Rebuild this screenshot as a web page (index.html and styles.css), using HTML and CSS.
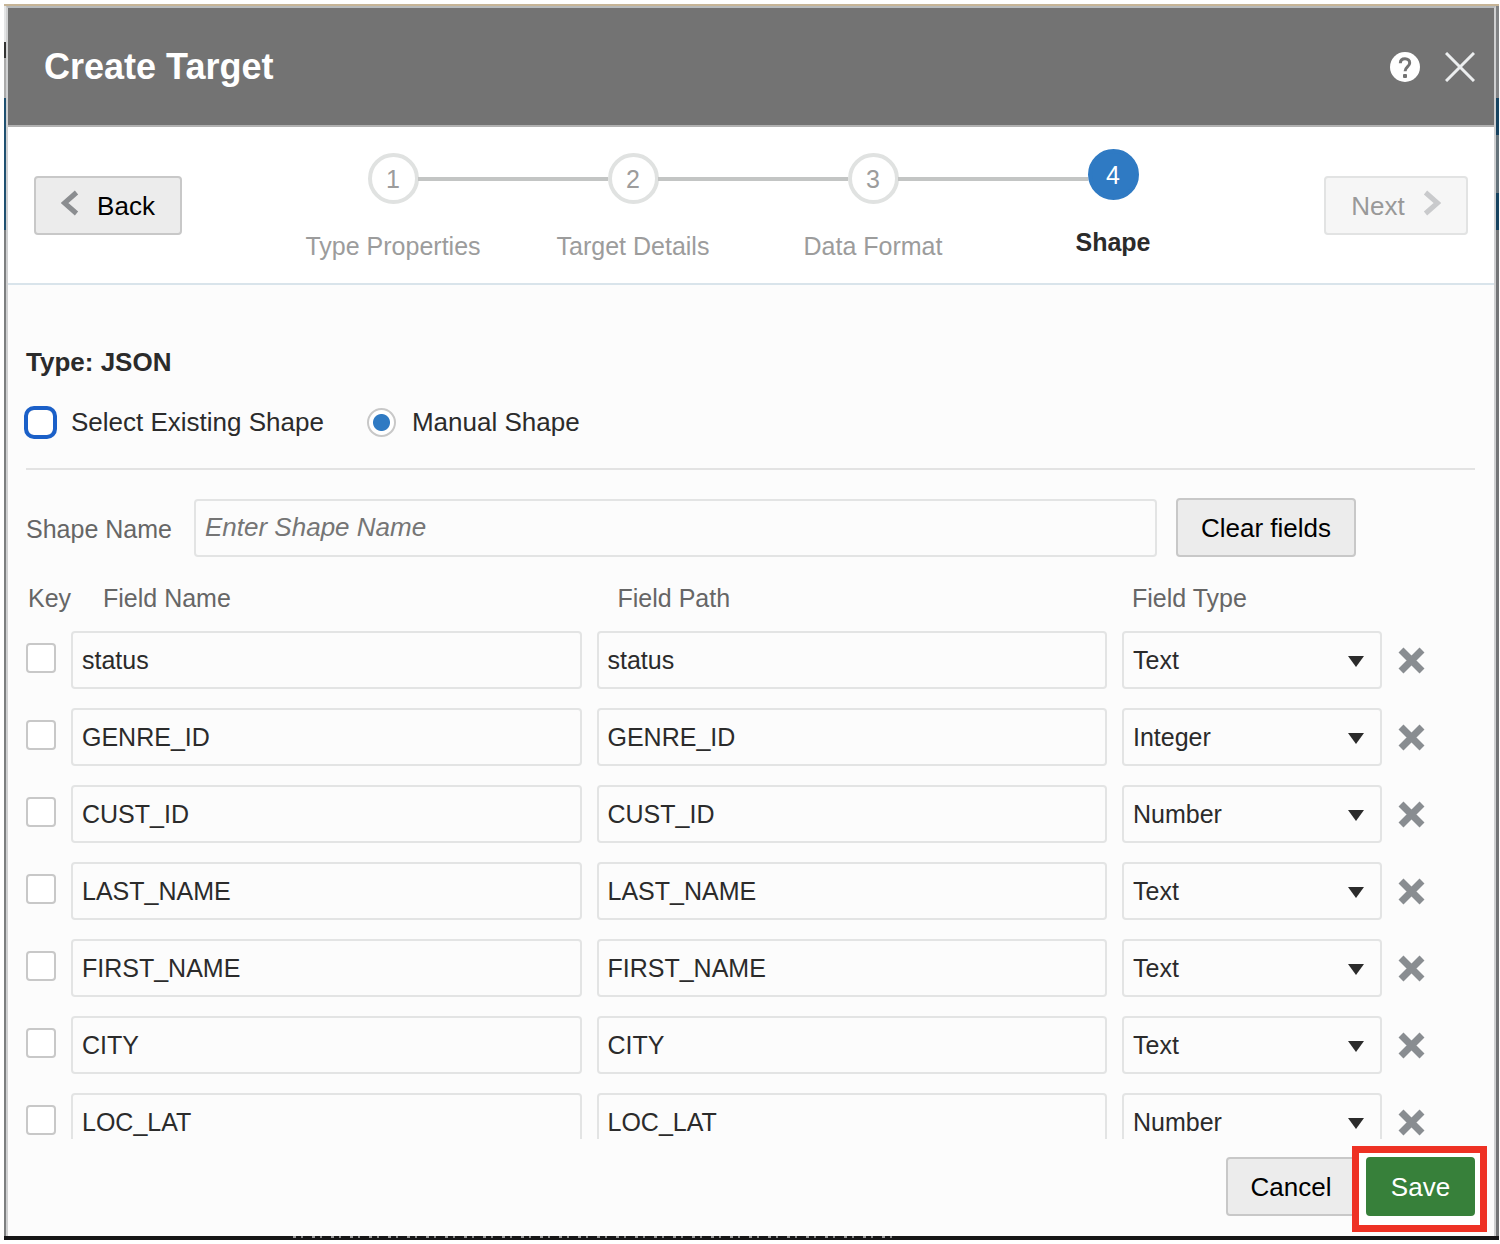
FILE: index.html
```html
<!DOCTYPE html>
<html lang="en">
<head>
<meta charset="utf-8">
<title>Create Target</title>
<link rel="stylesheet" href="styles.css">
</head>
<body>
<div class="backdrop">
<main class="dialog">
  <header class="titlebar">
    <h1>Create Target</h1>
    <button class="icon-button" type="button" aria-label="Help">
      <svg width="30" height="30" viewBox="0 0 30 30"><circle cx="15" cy="15" r="15" fill="#fff"/><path d="M10.300 11.200C10.400 8 12.200 6.700 15 6.700s4.700 1.700 4.700 4.300c0 3.600-4.600 3.700-4.600 8.300" fill="none" stroke="#737373" stroke-width="3"/><rect x="13" y="22" width="4" height="4" rx="1" fill="#737373"/></svg>
    </button>
    <button class="icon-button" type="button" aria-label="Close">
      <svg width="30" height="30" viewBox="0 0 30 30"><path d="M1 1 29 29M29 1 1 29" stroke="#eceeef" stroke-width="3"/></svg>
    </button>
  </header>
  <nav class="wizard" aria-label="Steps">
    <button class="button back" type="button"><svg width="18" height="26" viewBox="0 0 18 26"><path d="M15.500 2.500 3.500 13l12 10.500" fill="none" stroke="#8b8d90" stroke-width="5"/></svg>Back</button>
    <ol class="steps">
      <li><span class="dot">1</span><span>Type Properties</span></li>
      <li><span class="dot">2</span><span>Target Details</span></li>
      <li><span class="dot">3</span><span>Data Format</span></li>
      <li class="current" aria-current="step"><span class="dot">4</span><span>Shape</span></li>
    </ol>
    <button class="button next" type="button" disabled>Next<svg width="18" height="26" viewBox="0 0 18 26"><path d="m2.500 2.500 12 10.500-12 10.500" fill="none" stroke="#c9cacc" stroke-width="5"/></svg></button>
  </nav>
  <section class="content">
    <h2>Type: JSON</h2>
    <div class="modes">
      <label><input class="focused" type="radio" name="mode">Select Existing Shape</label>
      <label><input type="radio" name="mode" checked>Manual Shape</label>
    </div>
    <div class="shape-row">
      <label for="shape-name">Shape Name</label>
      <input class="field" id="shape-name" type="text" placeholder="Enter Shape Name">
      <button class="button clear" type="button">Clear fields</button>
    </div>
    <table>
      <colgroup><col class="col-key"><col><col><col class="col-type"><col class="col-remove"></colgroup>
      <thead><tr><th class="key">Key</th><th>Field Name</th><th>Field Path</th><th class="type">Field Type</th><td></td></tr></thead>
      <tbody id="fields"></tbody>
    </table>
  </section>
  <footer class="actions">
    <button class="button cancel" type="button">Cancel</button>
    <span class="callout"><button class="button save" type="button">Save</button></span>
  </footer>
</main>
<div class="console"></div>
</div>
<script src="fields.js"></script>
</body>
</html>
```
FILE: fields.js
```js
const fields = [
  ["status", "Text"],
  ["GENRE_ID", "Integer"],
  ["CUST_ID", "Number"],
  ["LAST_NAME", "Text"],
  ["FIRST_NAME", "Text"],
  ["CITY", "Text"],
  ["LOC_LAT", "Number"]
];

document.getElementById("fields").innerHTML = fields.map(([name, type]) => `
  <tr>
    <td><input class="check" type="checkbox" aria-label="${name} is a key"></td>
    <td><input class="field" type="text" value="${name}" aria-label="Field name"></td>
    <td><input class="field" type="text" value="${name}" aria-label="Field path"></td>
    <td><span class="select"><select class="field" aria-label="Field type">${
      ["Text", "Integer", "Number"].map(t => `<option${t === type ? " selected" : ""}>${t}</option>`).join("")
    }</select></span></td>
    <td><button class="icon-button remove" type="button" aria-label="Remove ${name}">
      <svg width="27" height="27" viewBox="0 0 27 27"><path d="M3 3 24 24M24 3 3 24" stroke="#898d91" stroke-width="7"/></svg>
    </button></td>
  </tr>`).join("");
```
FILE: styles.css
```css
*, *::before, *::after { box-sizing: border-box; }
body {
  margin: 0;
  background: #fff;
  color: #2b2b2b;
  font: 26px/30px "Liberation Sans", Arial, sans-serif;
}
h1, h2, ol { margin: 0; padding: 0; }
button, input, select { font: inherit; color: inherit; margin: 0; }

/* dimmed application behind the dialog */
.backdrop {
  display: flex;
  flex-direction: column;
  height: calc(100vh - 8px);
  margin: 4px 1px 4px 4px;
  border-top: 2px solid #c6b496;
  background:
    linear-gradient(#e4e5e6 36px, #333 36px 52px, #aaa 52px 92px, #1f5070 92px 224px, #7d7f80 224px) left / 3px 100% no-repeat,
    linear-gradient(#808284 92px, #154360 92px 129px, #64727a 129px 187px, #154360 187px 224px, #737577 224px) right / 4px 100% no-repeat;
}
.dialog {
  display: flex;
  flex-direction: column;
  flex: 1;
  min-height: 0;
  margin: 0 3px 0 2px;
  border: 2px solid #cfd0d1;
  border-top-color: #b6b9bb;
  border-bottom: 0;
  background: #fcfcfc;
}
.console {
  height: 4px;
  background:
    repeating-linear-gradient(90deg, #999 0 3px, transparent 3px 8px, #888 8px 10px, transparent 10px 19px) 289px 0 / 604px 2px no-repeat,
    #161617;
}

.titlebar {
  display: flex;
  align-items: center;
  gap: 25px;
  height: 119px;
  padding: 0 19px 0 36px;
  border-bottom: 2px solid #b1b1b1;
  background: #737373;
  color: #fff;
}
h1 { flex: 1; font-size: 36px; line-height: 40px; }
.icon-button { display: flex; padding: 0; border: 0; background: none; }

.wizard {
  display: flex;
  justify-content: space-between;
  align-items: flex-start;
  height: 158px;
  padding: 22px 26px 0;
  border-bottom: 2px solid #d9e4eb;
  background: #fff;
}
.button {
  height: 59px;
  border: 2px solid #c8c8c8;
  border-radius: 4px;
  padding: 0;
  background: #ececec;
  color: #000;
}
.back, .next {
  display: flex;
  align-items: center;
  justify-content: center;
  gap: 18px;
  margin-top: 27px;
}
.back svg, .next svg { margin-bottom: 6px; }
.back { width: 148px; }
.next { width: 144px; border-color: #e2e3e3; background: #f6f6f6; color: #999; }
.steps {
  display: flex;
  flex: 0 1 960px;
  list-style: none;
  color: #9c9c9c;
  font-size: 25px;
}
.steps li {
  display: flex;
  flex: 1;
  flex-direction: column;
  align-items: center;
  gap: 27px;
  position: relative;
  padding-top: 4px;
}
.steps li:not(:last-child)::after {
  content: "";
  position: absolute;
  top: 28px;
  left: calc(50% + 25px);
  width: calc(100% - 50px);
  height: 4px;
  background: #c3c5c4;
}
.dot {
  display: flex;
  align-items: center;
  justify-content: center;
  width: 51px;
  height: 51px;
  border: 4px solid #e0e2e1;
  border-radius: 50%;
}
.steps .current { padding-top: 0; color: #2b2b2b; font-weight: bold; }
.current .dot { z-index: 1; border-color: #2f7ac3; background: #2f7ac3; color: #fff; font-weight: normal; }

.content {
  flex: 1;
  min-height: 0;
  overflow: hidden;
  padding: 62px 19px 0 18px;
}
h2 { font-size: 26px; }
.modes {
  display: flex;
  gap: 43px;
  margin-top: 30px;
  padding-bottom: 31px;
  border-bottom: 2px solid #e3e3e3;
}
.modes label { display: flex; align-items: center; gap: 16px; }
.modes input {
  appearance: none;
  width: 29px;
  height: 29px;
  border: 2px solid #c8c8c8;
  border-radius: 50%;
  background: #fff;
}
.modes input:checked { background: radial-gradient(circle, #2f7ac3 8px, #fff 9px); }
.modes .focused { outline: 4px solid #1b60c8; outline-offset: -2px; border-radius: 8px; }

.shape-row {
  display: flex;
  align-items: center;
  margin: 28px 119px 25px 0;
  color: #666;
}
.shape-row label { width: 168px; padding-top: 3px; font-size: 25px; }
.shape-row .field { flex: 1; margin-right: 19px; font-size: 26px; }
.field {
  display: block;
  width: 100%;
  min-width: 0;
  height: 58px;
  border: 2px solid #e3e4e4;
  border-radius: 4px;
  padding: 0 9px;
  background: #fcfcfc;
  font-size: 25px;
}
.field::placeholder { color: #757575; font-style: italic; }
.clear { width: 180px; }

table { width: 100%; table-layout: fixed; border-collapse: collapse; }
.col-key { width: 45px; }
.col-type { width: 275px; }
.col-remove { width: 78px; }
th {
  height: 49px;
  padding: 0 0 17px 32px;
  color: #666;
  font-weight: normal;
  font-size: 25px;
  text-align: left;
  white-space: nowrap;
}
th + th + th { padding-left: 21px; }
th.key { padding-left: 2px; }
th.type { padding-left: 10px; }
tbody td { padding: 0 15px 19px 0; vertical-align: top; }
tbody td:first-child { padding-right: 0; }
.check {
  appearance: none;
  display: block;
  width: 30px;
  height: 30px;
  margin-top: 12px;
  border: 2px solid #c8c8c8;
  border-radius: 4px;
  background: #fff;
}
.select { display: block; position: relative; }
.select select { appearance: none; }
.select::after {
  content: "";
  position: absolute;
  top: 25px;
  right: 18px;
  border: 8px solid transparent;
  border-top: 11px solid #2b2b2b;
  border-bottom: 0;
  pointer-events: none;
}
.remove { padding: 16px 1px 15px; }

.actions {
  display: flex;
  justify-content: flex-end;
  align-items: flex-start;
  gap: 10px;
  height: 97px;
  padding: 18px 19px 0;
}
.cancel { width: 130px; }
.save { display: block; width: 109px; border-color: #37803a; background: #37803a; color: #fff; }
.callout { position: relative; z-index: 0; }
.callout::before {
  content: "";
  position: absolute;
  z-index: -1;
  inset: -11px -12px -16px -14px;
  border: 7px solid #ee3124;
  background: #fff;
}
```
